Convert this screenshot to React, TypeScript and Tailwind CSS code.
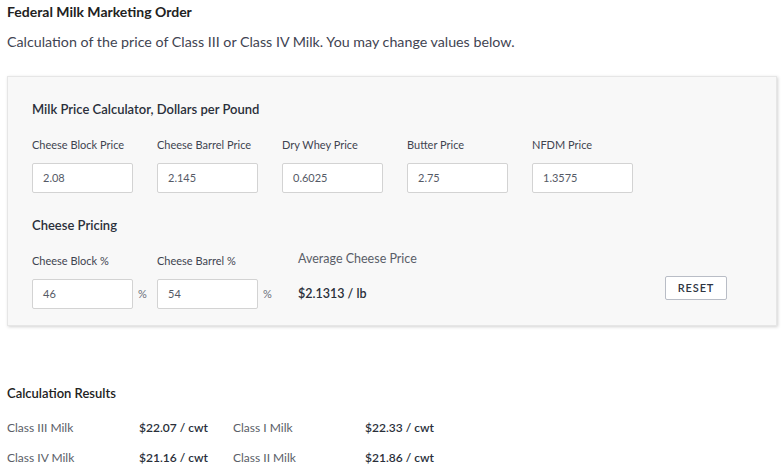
import React from "react";

const font = { fontFamily: "Lato, 'Noto Sans', sans-serif" };

function Field({ label, value, pct }: { label: string; value: string; pct?: boolean }) {
  return (
    <div className="flex flex-col w-[125px]">
      <div className="text-[11px] leading-[14px] text-[#3f4450] h-[14px]">{label}</div>
      <div className="flex items-end mt-[11px]">
        <div className="w-[101px] h-[30px] bg-white border border-[#d3d3d3] rounded-[2px] flex items-center pl-[10px] text-[11px] text-[#555a66]">
          {value}
        </div>
        {pct && <span className="ml-[5px] mb-[7px] text-[11px] text-[#6b6f78]">%</span>}
      </div>
    </div>
  );
}

export default function App() {
  return (
    <div style={font} className="w-[782px] h-[473px] bg-white text-[#222] overflow-hidden">
      <div className="pl-[7px] pt-[3px]">
        <div className="text-[14px] font-bold leading-[18px] text-[#222]">Federal Milk Marketing Order</div>
        <div className="text-[14.25px] leading-[18px] text-[#3f4452] mt-[12px]">
          Calculation of the price of Class III or Class IV Milk. You may change values below.
        </div>
      </div>
      <div className="ml-[7px] mt-[25px] w-[770px] h-[250px] bg-[#f8f8f8] border border-[#e6e6e6] shadow-[1px_1px_3px_rgba(0,0,0,0.18)] pl-[24px] pt-[23px]">
        <div className="text-[13px] font-semibold leading-[18px] text-[#2a2f3a]">Milk Price Calculator, Dollars per Pound</div>
        <div className="flex mt-[20px]">
          <Field label="Cheese Block Price" value="2.08" />
          <Field label="Cheese Barrel Price" value="2.145" />
          <Field label="Dry Whey Price" value="0.6025" />
          <Field label="Butter Price" value="2.75" />
          <Field label="NFDM Price" value="1.3575" />
        </div>
        <div className="text-[13px] font-semibold leading-[18px] text-[#2a2f3a] mt-[23px]">Cheese Pricing</div>
        <div className="flex mt-[20px]">
          <Field label="Cheese Block %" value="46" pct />
          <Field label="Cheese Barrel %" value="54" pct />
          <div className="flex flex-col ml-[16px] -mt-[3px]">
            <div className="text-[12.5px] leading-[16px] text-[#5a5e68]">Average Cheese Price</div>
            <div className="text-[12.5px] font-semibold leading-[16px] text-[#2a2f3a] mt-[19px]">$2.1313 / lb</div>
          </div>
          <div className="flex-1 flex justify-end items-start pr-[49px] pt-[22px]">
            <button className="w-[62px] h-[24px] bg-white border border-[#b9bdc6] rounded-[2px] text-[11px] font-semibold tracking-[0.08em] text-[#2f3542] flex items-center justify-center">
              RESET
            </button>
          </div>
        </div>
      </div>
      <div className="pl-[7px] mt-[59px]">
        <div className="text-[13px] font-semibold leading-[16px] text-[#222]">Calculation Results</div>
        <div className="grid grid-cols-[132px_94px_132px_120px] text-[12px] leading-[16px] mt-[19px] gap-y-[14px]">
          <div className="text-[#5a5e68]">Class III Milk</div>
          <div className="font-semibold text-[#2a2f3a]">$22.07 / cwt</div>
          <div className="text-[#5a5e68]">Class I Milk</div>
          <div className="font-semibold text-[#2a2f3a]">$22.33 / cwt</div>
          <div className="text-[#5a5e68]">Class IV Milk</div>
          <div className="font-semibold text-[#2a2f3a]">$21.16 / cwt</div>
          <div className="text-[#5a5e68]">Class II Milk</div>
          <div className="font-semibold text-[#2a2f3a]">$21.86 / cwt</div>
        </div>
      </div>
    </div>
  );
}
